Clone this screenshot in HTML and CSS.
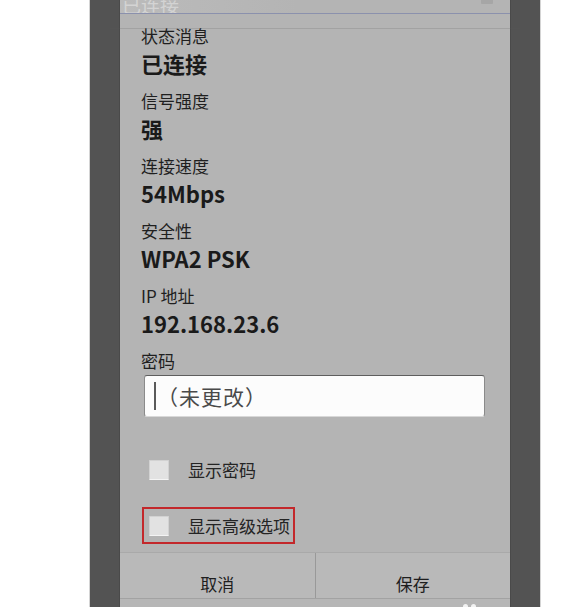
FILE: index.html
```html
<!DOCTYPE html>
<html lang="zh-CN">
<head>
  <meta charset="UTF-8" />
  <meta name="viewport" content="width=device-width, initial-scale=1.0"/>
  <title>已连接</title>
  <link rel="stylesheet" href="styles.css">
</head>
<body>

  <div class="screen">
    <div class="dialog">

      <div class="title-bar">
        <span class="title">已连接</span>
        <span class="title-icon"></span>
      </div>

      <div class="info">
        <div class="group">
          <div class="label">状态消息</div>
          <div class="value">已连接</div>
        </div>
        <div class="group">
          <div class="label">信号强度</div>
          <div class="value">强</div>
        </div>
        <div class="group">
          <div class="label">连接速度</div>
          <div class="value">54Mbps</div>
        </div>
        <div class="group">
          <div class="label">安全性</div>
          <div class="value">WPA2 PSK</div>
        </div>
        <div class="group">
          <div class="label">IP 地址</div>
          <div class="value">192.168.23.6</div>
        </div>
      </div>

      <div class="password">
        <div class="label">密码</div>
        <div class="input">
          <span class="cursor"></span>
          <span class="placeholder">（未更改）</span>
        </div>
      </div>

      <div class="options">
        <label class="option">
          <span class="checkbox"></span>
          <span>显示密码</span>
        </label>
        <label class="option highlight">
          <span class="checkbox"></span>
          <span>显示高级选项</span>
        </label>
      </div>

      <div class="buttons">
        <button>取消</button>
        <button>保存</button>
      </div>

      <div class="nav-strip">
        <span class="dots"><i></i><i></i></span>
      </div>

    </div>
  </div>

</body>
</html>
```

FILE: styles.css
```css
:root {
  --dark: #535353;
  --dialog: #b4b4b4;
  --text: #1c1c1c;
}

body {
  margin: 0;
  background: #ffffff;
  font-family: "Noto Sans CJK SC", "Noto Sans", sans-serif;
  color: var(--text);
}

.screen {
  position: relative;
  margin-left: 89px;
  width: 390px;
  height: 607px;
  padding: 0 30px;
  background: var(--dark);
  border-left: 1px solid #d4d4d4;
  border-right: 1px solid #d4d4d4;
  overflow: hidden;
}

/* faint ghost line across the screen */
.screen::after {
  content: "";
  position: absolute;
  top: 28px;
  left: 20px;
  right: 20px;
  height: 1px;
  background: rgba(90, 90, 90, 0.2);
}

.dialog {
  height: 607px;
  background: var(--dialog);
  display: flex;
  flex-direction: column;
  box-shadow: 1px 0 0 #4a4a4a, -1px 0 0 #4a4a4a;
}

.title-bar {
  height: 13px;
  flex-shrink: 0;
  border-bottom: 1px solid #8b91ad;
  display: flex;
  justify-content: space-between;
  overflow: hidden;
}

.title {
  font-size: 19px;
  line-height: 10px;
  padding-left: 2px;
  width: 176px;
  color: rgba(230, 230, 230, 0.6);
  background: linear-gradient(to right, rgba(200, 200, 200, 0.35), rgba(200, 200, 200, 0));
}

.title-icon {
  width: 12px;
  height: 4px;
  margin-right: 17px;
  background: #a6a6a6;
  border-radius: 0 0 1px 1px;
}

.info {
  padding: 10px 0 0 21px;
}

.group {
  height: 65px;
}

.label {
  height: 24px;
  font-size: 17px;
  line-height: 24px;
  color: #1f1f1f;
}

.value {
  height: 28px;
  margin-top: 1px;
  font-size: 22px;
  line-height: 28px;
  font-weight: bold;
  color: #1a1a1a;
}

.password {
  padding-left: 21px;
}

.input {
  margin: 2px 0 0 3px;
  width: 341px;
  height: 42px;
  box-sizing: border-box;
  background: #fcfcfc;
  border: 1px solid #8a8a8a;
  border-top-color: #5e5e5e;
  border-bottom-color: #d8d8d8;
  border-radius: 3px;
  display: flex;
  align-items: center;
  padding-left: 9px;
}

.cursor {
  width: 2px;
  height: 28px;
  background: #5a5a5a;
}

.placeholder {
  font-size: 21px;
  letter-spacing: 1px;
  color: #4a4a4a;
  margin-left: 1px;
}

.options {
  padding: 34px 0 0 22px;
  display: flex;
  flex-direction: column;
  align-items: flex-start;
  gap: 19px;
}

.option {
  height: 37px;
  box-sizing: border-box;
  border: 2px solid transparent;
  padding: 0 3px 0 5px;
  display: flex;
  align-items: center;
  gap: 19px;
  font-size: 17px;
  color: #242424;
}

.option.highlight {
  border-color: #c3282b;
}

.checkbox {
  width: 20px;
  height: 20px;
  box-sizing: border-box;
  background: #e2e2e2;
  border: 1px solid #d2d2d2;
  border-bottom-color: #f4f4f4;
  border-radius: 1px;
}

.buttons {
  margin-top: 8px;
  display: flex;
  flex-shrink: 0;
  border-top: 1px solid #a9a9a9;
  height: 46px;
  box-sizing: border-box;
  background: #b9b9b9;
}

.buttons button {
  flex: 1;
  background: none;
  border: none;
  font-family: inherit;
  font-size: 17px;
  color: #1e1e1e;
  padding: 16px 0 0;
  line-height: 26px;
}

.buttons button + button {
  border-left: 1px solid #999;
}

.nav-strip {
  flex: 1;
  border-top: 1px solid #a2a2a2;
  background: #b6b6b6;
  position: relative;
}

.dots {
  position: absolute;
  left: 343px;
  top: 5px;
  display: flex;
  gap: 3px;
}

.dots i {
  width: 5px;
  height: 5px;
  border-radius: 50%;
  background: #f2f2f2;
}
```
